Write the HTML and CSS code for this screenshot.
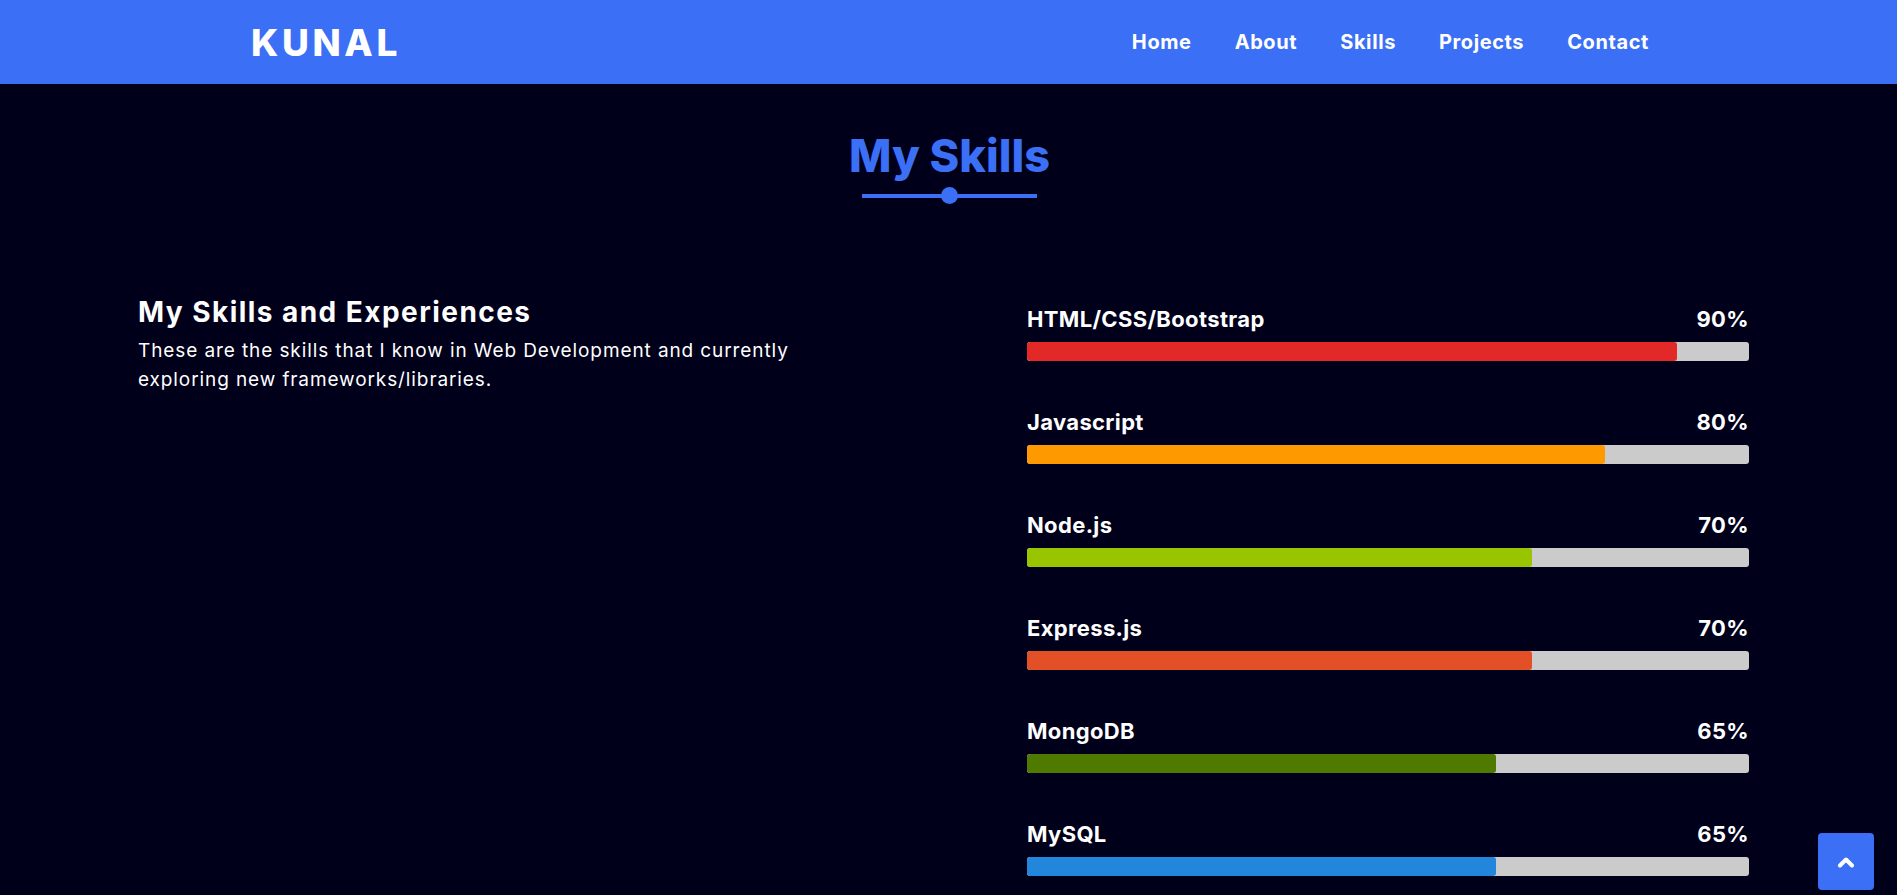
FILE: index.html
```html
<!DOCTYPE html>
<html lang="en">
<head>
<meta charset="utf-8">
<title>Kunal - Skills</title>
<link rel="stylesheet" href="styles.css">
</head>
<body>
<header class="topbar">
  <div class="logo">KUNAL</div>
  <nav class="nav">
    <a href="#">Home</a>
    <a href="#">About</a>
    <a href="#">Skills</a>
    <a href="#">Projects</a>
    <a href="#">Contact</a>
  </nav>
</header>

<main class="skills">
  <div class="heading">
    <h1 class="title">My Skills</h1>
    <div class="divider"><span class="dot"></span></div>
  </div>

  <div class="content">
    <div class="intro">
      <h2>My Skills and Experiences</h2>
      <p>These are the skills that I know in Web Development and currently exploring new frameworks/libraries.</p>
    </div>
    <div class="bars">
      <div class="skill">
        <div class="info"><span>HTML/CSS/Bootstrap</span><span>90%</span></div>
        <div class="track"><div class="fill red" style="width:90%"></div></div>
      </div>
      <div class="skill">
        <div class="info"><span>Javascript</span><span>80%</span></div>
        <div class="track"><div class="fill orange" style="width:80%"></div></div>
      </div>
      <div class="skill">
        <div class="info"><span>Node.js</span><span>70%</span></div>
        <div class="track"><div class="fill lime" style="width:70%"></div></div>
      </div>
      <div class="skill">
        <div class="info"><span>Express.js</span><span>70%</span></div>
        <div class="track"><div class="fill brick" style="width:70%"></div></div>
      </div>
      <div class="skill">
        <div class="info"><span>MongoDB</span><span>65%</span></div>
        <div class="track"><div class="fill green" style="width:65%"></div></div>
      </div>
      <div class="skill">
        <div class="info"><span>MySQL</span><span>65%</span></div>
        <div class="track"><div class="fill blue" style="width:65%"></div></div>
      </div>
    </div>
  </div>
</main>

<a class="to-top" href="#">
  <svg width="18" height="12" viewBox="0 0 18 12"><path d="M3 9.5 L9 3.5 L15 9.5" fill="none" stroke="#fff" stroke-width="4" stroke-linecap="round" stroke-linejoin="round"/></svg>
</a>
</body>
</html>
```
FILE: styles.css
```css
* { box-sizing: border-box; }
html, body { margin: 0; padding: 0; }
body {
  background: #00001a;
  color: #fff;
  font-family: "Inter", "Noto Sans", sans-serif;
  min-height: 895px;
  overflow: hidden;
}
a { color: inherit; text-decoration: none; }

.topbar {
  height: 84px;
  background: #3b6ff5;
  display: flex;
  align-items: center;
  justify-content: space-between;
  padding: 0 248px 0 251px;
}
.logo {
  font-size: 37px;
  font-weight: 800;
  letter-spacing: 3.6px;
  line-height: 1;
  margin-top: 1px;
}
.nav {
  display: flex;
  gap: 43px;
}
.nav a {
  font-size: 20px;
  font-weight: 700;
  letter-spacing: 0.6px;
  line-height: 1;
}

.skills {
  padding-top: 50px;
}
.heading {
  padding-left: 2px;
}
.title {
  margin: 0;
  text-align: center;
  font-size: 45px;
  font-weight: 800;
  line-height: 44px;
  color: #3b6ff5;
}
.divider {
  width: 175px;
  height: 17px;
  margin: 9px auto 0;
  display: flex;
  align-items: center;
  justify-content: center;
  background: linear-gradient(#3b6ff5, #3b6ff5) center / 100% 4px no-repeat;
}
.dot {
  width: 17px;
  height: 17px;
  border-radius: 50%;
  background: #3b6ff5;
}

.content {
  display: grid;
  grid-template-columns: 1fr 722px;
  margin-top: 91px;
  padding: 0 148px 0 138px;
}
.intro h2 {
  margin: 0;
  font-size: 28px;
  font-weight: 700;
  line-height: 34px;
  letter-spacing: 1.45px;
}
.intro p {
  margin: 7px 0 0;
  max-width: 690px;
  font-size: 19px;
  line-height: 29px;
  letter-spacing: 0.9px;
}
.bars {
  margin-top: 11px;
  display: flex;
  flex-direction: column;
  gap: 48px;
}
.info {
  display: flex;
  justify-content: space-between;
  font-size: 22px;
  font-weight: 700;
  line-height: 26px;
  letter-spacing: 0.35px;
}
.track {
  margin-top: 10px;
  height: 19px;
  background: #cbcbcb;
  border-radius: 3px;
  overflow: hidden;
}
.fill {
  height: 100%;
  border-radius: 3px;
}
.red { background: #e32828; }
.orange { background: #ff9900; }
.lime { background: #99c500; }
.brick { background: #e34f26; }
.green { background: #4e7a00; }
.blue { background: #2286dd; }

.to-top {
  position: fixed;
  right: 23px;
  bottom: 5px;
  width: 56px;
  height: 57px;
  background: #3b6ff5;
  border-radius: 4px;
  display: flex;
  align-items: center;
  justify-content: center;
}
```
